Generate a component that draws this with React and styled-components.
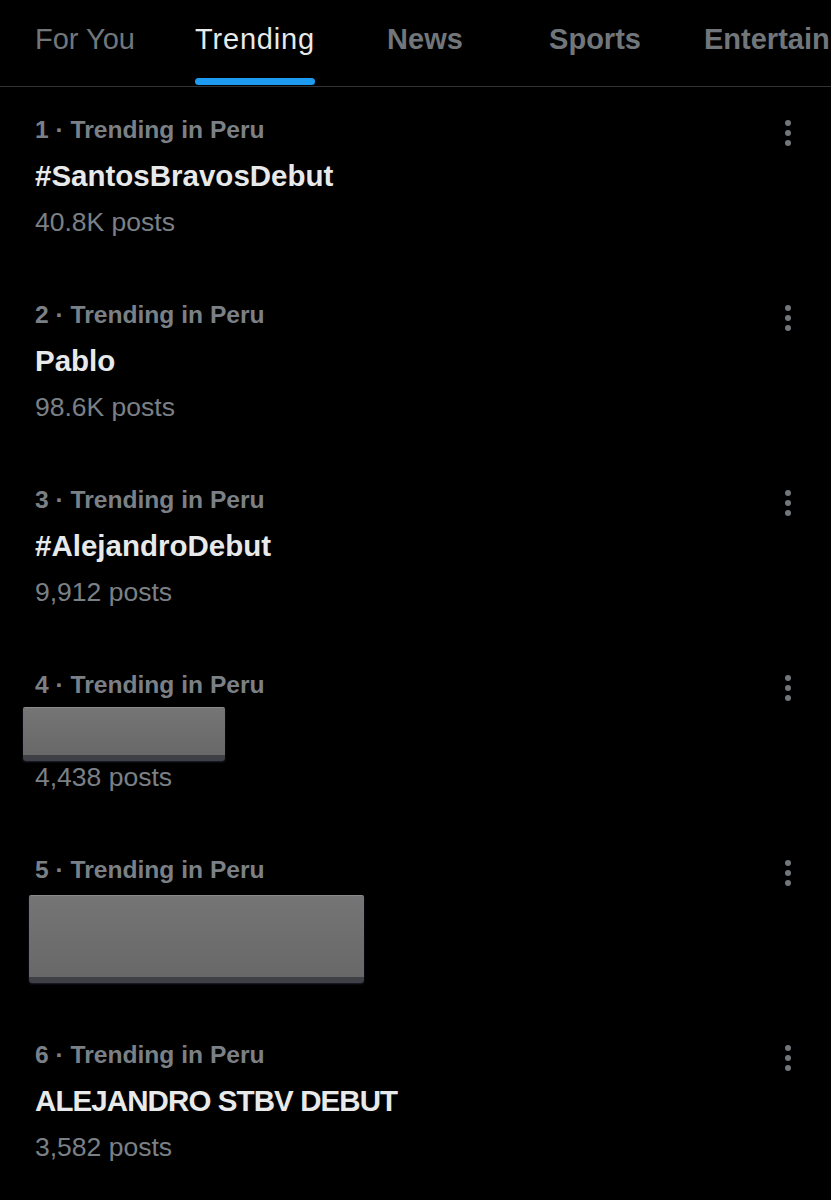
import React from "react";
import styled, { createGlobalStyle } from "styled-components";

const Global = createGlobalStyle`
  html, body {
    margin: 0;
    padding: 0;
    background: #000;
  }
  body {
    font-family: "Liberation Sans", Arial, sans-serif;
    -webkit-font-smoothing: antialiased;
  }
`;

const Page = styled.div`
  width: 831px;
  min-height: 1200px;
  background: #000;
  overflow: hidden;
`;

const TabBar = styled.nav`
  display: flex;
  height: 86px;
  border-bottom: 1px solid #2f3336;
  overflow: hidden;
`;

const Tab = styled.div`
  flex: 0 0 auto;
  min-width: 170px;
  box-sizing: border-box;
  padding: 0 24px;
  display: flex;
  justify-content: center;
`;

const TabInner = styled.div`
  display: flex;
  flex-direction: column;
  align-items: center;
  height: 86px;
`;

const TabLabel = styled.span`
  font-size: 29px;
  line-height: 78px;
  font-weight: ${(p) => p.$weight};
  color: ${(p) => (p.$active ? "#e7e9ea" : "#71767b")};
  white-space: nowrap;
  letter-spacing: ${(p) => (p.$active ? "0.8px" : "0")};
`;

const Underline = styled.div`
  width: 100%;
  height: 7px;
  border-radius: 4px;
  background: #1d9bf0;
`;

const List = styled.div`
  display: flex;
  flex-direction: column;
`;

const Item = styled.div`
  height: 185px;
  box-sizing: border-box;
  padding: 20px 35px 0 35px;
  display: flex;
  justify-content: space-between;
  align-items: flex-start;
`;

const Body = styled.div`
  display: flex;
  flex-direction: column;
`;

const Meta = styled.div`
  font-size: 24.6px;
  line-height: 46px;
  font-weight: 700;
  color: #7b8086;
`;

const Title = styled.div`
  font-size: 29.5px;
  line-height: 46px;
  font-weight: 700;
  color: #e7e9ea;
  white-space: nowrap;
  letter-spacing: ${(p) => (p.$caps ? "-0.9px" : "0")};
`;

const Posts = styled.div`
  font-size: 26.5px;
  line-height: 46px;
  color: #7b8086;
`;

const Redaction = styled.div`
  width: ${(p) => p.$w}px;
  height: ${(p) => p.$h}px;
  margin: ${(p) => p.$m};
  box-sizing: border-box;
  background: linear-gradient(180deg, #757575 0%, #6e6e6e 55%, #686868 100%);
  border-top: 1px solid #8a8a8a;
  border-bottom: 6px solid #3f4046;
  border-radius: 2px 2px 3px 3px;
  box-shadow: 0 1px 2px rgba(120, 130, 200, 0.25);
`;

const More = styled.button`
  background: none;
  border: 0;
  padding: 0;
  margin-top: 10px;
  width: 16px;
  height: 32px;
  display: flex;
  align-items: center;
  justify-content: center;
`;

const DotsIcon = () => (
  <svg width="8" height="30" viewBox="0 0 8 30">
    <circle cx="4" cy="5" r="3" fill="#71767b" />
    <circle cx="4" cy="15" r="3" fill="#71767b" />
    <circle cx="4" cy="25" r="3" fill="#71767b" />
  </svg>
);

const tabs = [
  { label: "For You", weight: 400 },
  { label: "Trending", weight: 500, active: true },
  { label: "News", weight: 700 },
  { label: "Sports", weight: 700 },
  { label: "Entertainment", weight: 700 },
];

const trends = [
  { n: 1, title: "#SantosBravosDebut", posts: "40.8K posts" },
  { n: 2, title: "Pablo", posts: "98.6K posts" },
  { n: 3, title: "#AlejandroDebut", posts: "9,912 posts" },
  { n: 4, hiddenTitle: true, posts: "4,438 posts" },
  { n: 5, hiddenAll: true },
  { n: 6, title: "ALEJANDRO STBV DEBUT", posts: "3,582 posts", caps: true },
];

export default function App() {
  return (
    <Page>
      <Global />
      <TabBar>
        {tabs.map((t) => (
          <Tab key={t.label}>
            <TabInner>
              <TabLabel $weight={t.weight} $active={t.active}>
                {t.label}
              </TabLabel>
              {t.active && <Underline />}
            </TabInner>
          </Tab>
        ))}
      </TabBar>
      <List>
        {trends.map((t) => (
          <Item key={t.n}>
            <Body>
              <Meta>{t.n} · Trending in Peru</Meta>
              {t.hiddenAll ? (
                <Redaction $w={335} $h={88} $m="2px 0 0 -6px" />
              ) : (
                <>
                  {t.hiddenTitle ? (
                    <Redaction $w={202} $h={54} $m="-1px 0 -7px -12px" />
                  ) : (
                    <Title $caps={t.caps}>{t.title}</Title>
                  )}
                  <Posts>{t.posts}</Posts>
                </>
              )}
            </Body>
            <More aria-label="More">
              <DotsIcon />
            </More>
          </Item>
        ))}
      </List>
    </Page>
  );
}
